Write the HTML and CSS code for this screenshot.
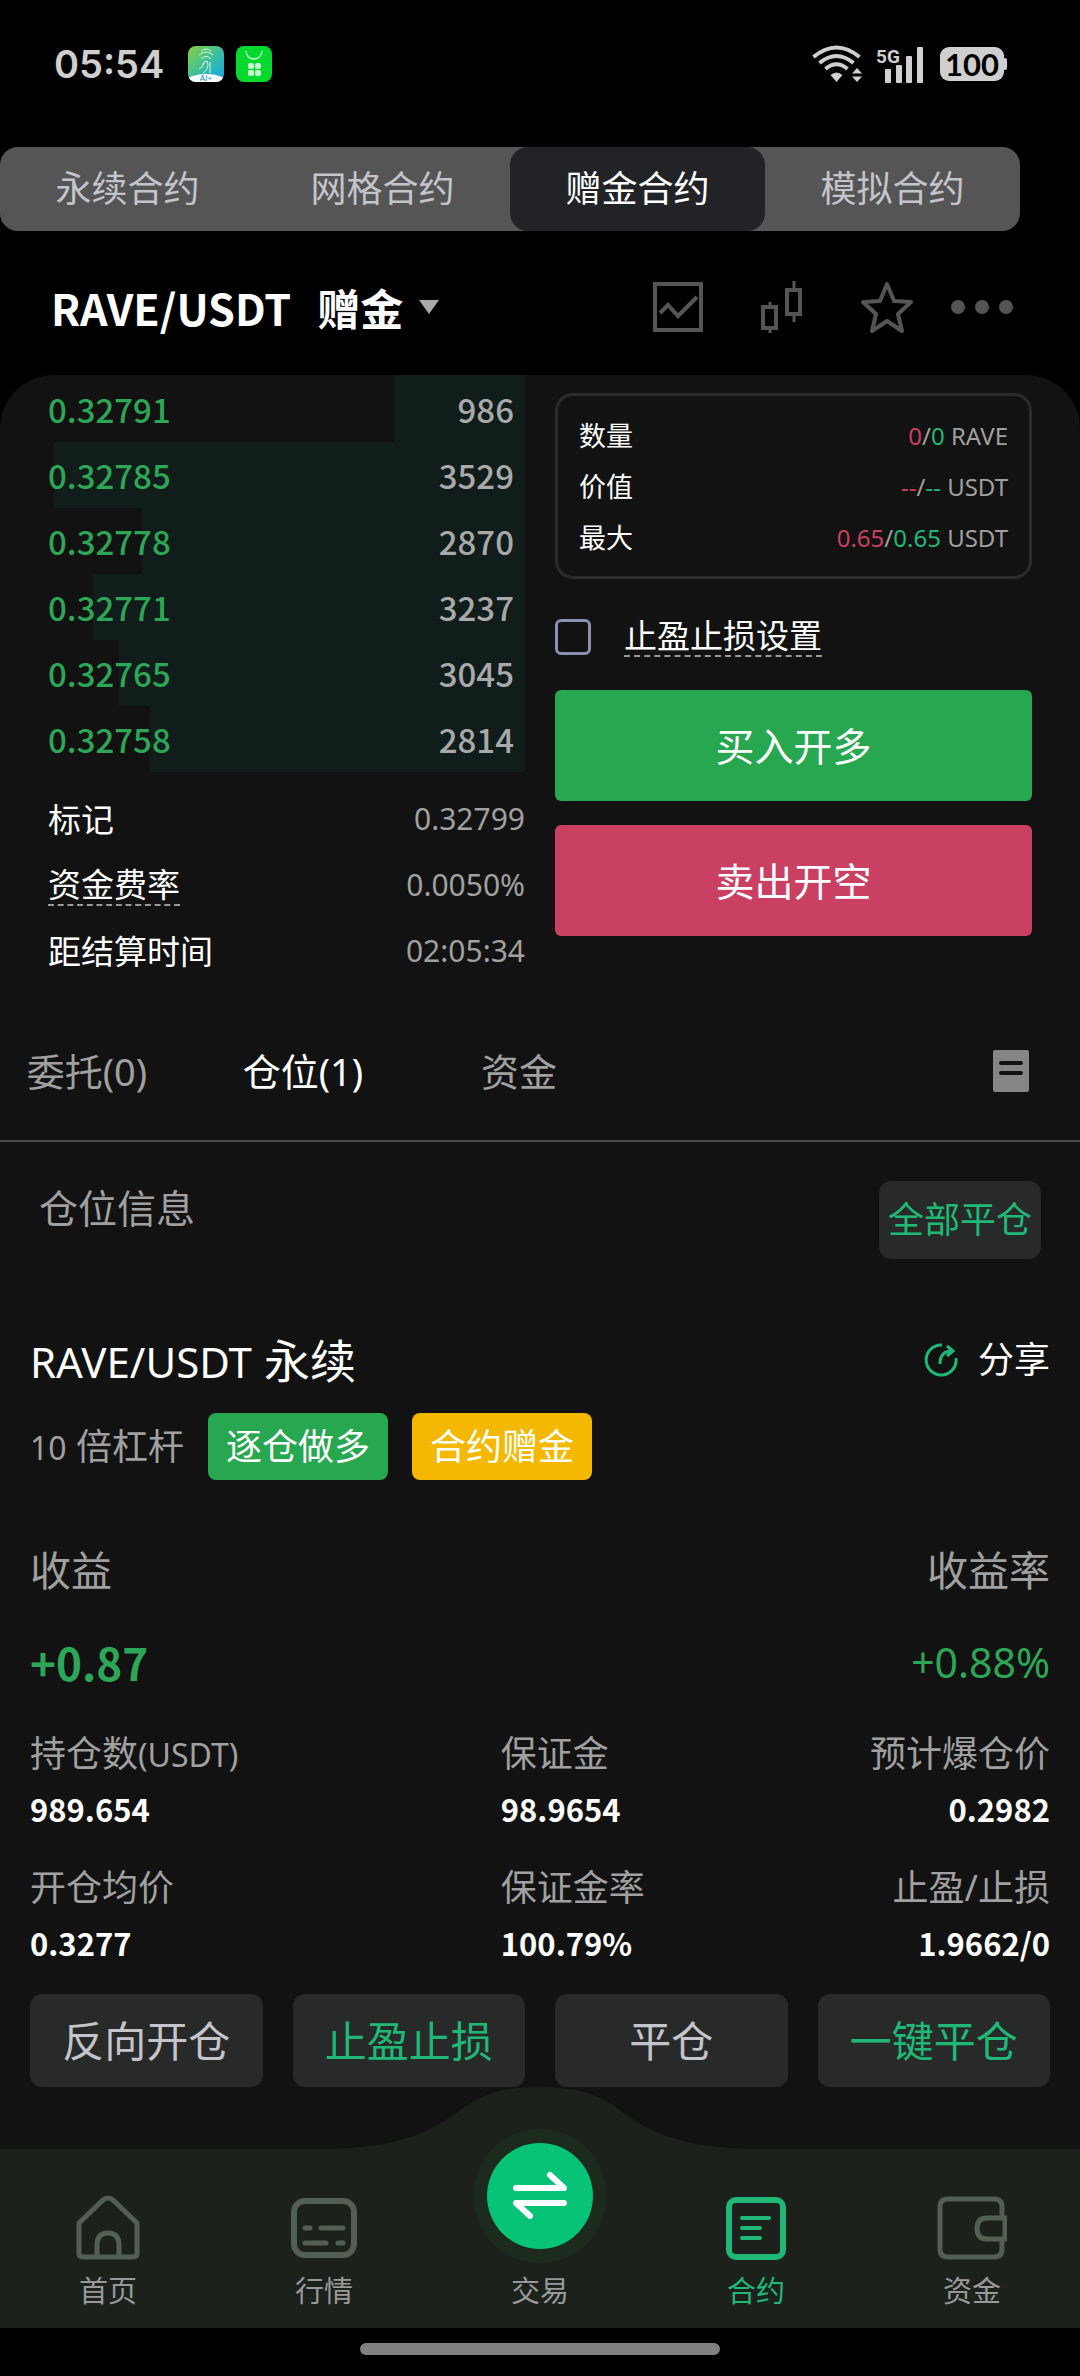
FILE: index.html
```html
<!DOCTYPE html>
<html lang="zh-CN">
  <head>
    <meta charset="UTF-8" />
    <meta name="viewport" content="width=device-width, initial-scale=1.0" />
    <title>RAVE/USDT 赠金合约</title>
    <link rel="stylesheet" href="styles.css">
  </head>
  <body>
    <header>
      <div class="status_bar">
        <time class="clock">05:54</time>
        <svg class="app_icon" viewBox="0 0 36 36">
          <defs>
            <linearGradient id="finger" x1="0" y1="0" x2="1" y2="1">
              <stop offset="0" stop-color="#8ccf3a" />
              <stop offset="0.5" stop-color="#3cbf9c" />
              <stop offset="1" stop-color="#12a5ee" />
            </linearGradient>
            <clipPath id="round"><rect width="36" height="36" rx="8" /></clipPath>
          </defs>
          <g clip-path="url(#round)">
            <rect width="36" height="36" fill="url(#finger)" />
            <ellipse cx="18" cy="36" rx="20" ry="8" fill="#fff" />
          </g>
          <path d="M13 5q5-4 10 0M11 9q7-6 14 0M13 13q5-5 10 0M11 23q4-2 5-6q3-4 4 1q0 6-5 9M14 19q3-5 6-3M22 16v11" fill="none" stroke="#d9f5e6" stroke-width="1" />
          <text x="18" y="35" class="app_text">AI+</text>
        </svg>
        <svg class="app_icon" viewBox="0 0 36 36">
          <rect width="36" height="36" rx="8" fill="#04da2e" />
          <path d="M10 5a8 8 0 0 0 16 0" fill="none" stroke="#b4ffc0" stroke-width="1.4" />
          <g fill="#c4ffce">
            <rect x="12" y="17" width="6" height="6" rx="2" />
            <rect x="19" y="17" width="6" height="6" rx="2" />
            <rect x="12" y="24" width="6" height="6" rx="2" />
            <rect x="19" y="24" width="6" height="6" rx="2" />
          </g>
        </svg>
        <svg class="wifi" viewBox="0 0 52 38">
          <path d="M1.5 12q23-19 46 0M7.5 18q17-14 34 0M13.5 24q11-9.5 22 0" fill="none" stroke="#cfcfcf" stroke-width="4" />
          <path d="M18.5 30q6-5 12 0l-6 7zM45 23l5 5.5H40zM45 37l5-5.5H40z" fill="#cfcfcf" />
        </svg>
        <svg class="signal" viewBox="0 0 48 38">
          <text x="0" y="18" class="signal_text">5G</text>
          <g fill="#cfcfcf">
            <rect x="9" y="24" width="6" height="14" rx="1" />
            <rect x="20" y="20" width="6" height="18" rx="1" />
            <rect x="30" y="11" width="6" height="27" rx="1" />
            <rect x="41" y="2" width="6" height="36" rx="1" />
          </g>
        </svg>
        <span class="battery">100</span>
      </div>
      <nav class="type_tabs">
        <a href="#">永续合约</a>
        <a href="#">网格合约</a>
        <a href="#" class="active">赠金合约</a>
        <a href="#">模拟合约</a>
      </nav>
      <div class="pair_bar">
        <button class="pair_name">RAVE/USDT<span>赠金</span></button>
        <button class="icon_btn" aria-label="图表">
          <svg width="50" height="50" viewBox="0 0 50 50" fill="none" stroke="#555" stroke-width="4">
            <rect x="2" y="2" width="46" height="46" />
            <path d="M7 31l8-8 10 11 19-19" />
          </svg>
        </button>
        <button class="icon_btn" aria-label="K线">
          <svg width="42" height="52" viewBox="0 0 42 52" fill="none" stroke="#555" stroke-width="4">
            <path d="M9 21v4M9 48v4M33 0v8M33 34v7" stroke-width="3" />
            <rect x="2" y="26" width="13" height="21" />
            <rect x="26" y="9" width="13" height="24" />
          </svg>
        </button>
        <button class="icon_btn" aria-label="收藏">
          <svg width="52" height="52" viewBox="0 0 52 52" fill="none" stroke="#555" stroke-width="4" stroke-linejoin="round">
            <path d="M26 3l7 17 17 1-13 12 4 17-15-10-15 10 4-17L2 21l17-1z" />
          </svg>
        </button>
        <button class="icon_btn" aria-label="更多">
          <svg width="62" height="14" viewBox="0 0 62 14" fill="#555">
            <circle cx="7" cy="7" r="7" />
            <circle cx="31" cy="7" r="7" />
            <circle cx="55" cy="7" r="7" />
          </svg>
        </button>
      </div>
    </header>

    <main class="panel">
      <section class="trade">
        <div class="book">
          <ul class="bids">
            <li><i style="width: 27.5%"></i><b>0.32791</b><span>986</span></li>
            <li><i style="width: 98.7%"></i><b>0.32785</b><span>3529</span></li>
            <li><i style="width: 80.3%"></i><b>0.32778</b><span>2870</span></li>
            <li><i style="width: 90.6%"></i><b>0.32771</b><span>3237</span></li>
            <li><i style="width: 85.1%"></i><b>0.32765</b><span>3045</span></li>
            <li><i style="width: 78.6%"></i><b>0.32758</b><span>2814</span></li>
          </ul>
          <dl class="market">
            <div><dt>标记</dt><dd>0.32799</dd></div>
            <div><dt><span class="dashed">资金费率</span></dt><dd>0.0050%</dd></div>
            <div><dt>距结算时间</dt><dd>02:05:34</dd></div>
          </dl>
        </div>
        <form class="order">
          <dl class="limits">
            <div><dt>数量</dt><dd><span class="down">0</span>/<span class="up">0</span> RAVE</dd></div>
            <div><dt>价值</dt><dd><span class="down">--</span>/<span class="up">--</span> USDT</dd></div>
            <div><dt>最大</dt><dd><span class="down">0.65</span>/<span class="up">0.65</span> USDT</dd></div>
          </dl>
          <div class="stop_box">
            <input type="checkbox" id="stop" name="stop" />
            <label for="stop" class="dashed">止盈止损设置</label>
          </div>
          <button type="button" class="buy">买入开多</button>
          <button type="button" class="sell">卖出开空</button>
        </form>
      </section>

      <nav class="list_tabs">
        <a href="#">委托(0)</a>
        <a href="#" class="active">仓位(1)</a>
        <a href="#">资金</a>
        <button class="history" aria-label="历史记录">
          <svg width="36" height="42" viewBox="0 0 36 42">
            <rect width="36" height="42" rx="2" fill="#868686" />
            <path d="M8 13h20M8 23h20" stroke="#121212" stroke-width="4" stroke-linecap="round" />
          </svg>
        </button>
      </nav>

      <div class="info_bar">
        <h2>仓位信息</h2>
        <button class="close_all">全部平仓</button>
      </div>

      <section class="position">
        <div class="title_row">
          <h3><span>RAVE/USDT</span> 永续</h3>
          <a href="#" class="share">
            <svg width="34" height="36" viewBox="0 0 34 36" fill="none" stroke="#1fb877" stroke-width="3">
              <path d="M18 3A15 15 0 1 0 32 16" />
              <path d="M16 22c0-9 4-13 12-13M23 4l6 5-6 5" />
            </svg>
            分享
          </a>
        </div>
        <div class="tags">
          <span><span class="latin">10</span> 倍杠杆</span>
          <span class="tag">逐仓做多</span>
          <span class="tag gift">合约赠金</span>
        </div>
        <div class="profit">
          <p>收益</p>
          <p>收益率</p>
          <strong>+0.87</strong>
          <span>+0.88%</span>
        </div>
        <dl class="stats">
          <div><dt>持仓数<span class="latin">(USDT)</span></dt><dd>989.654</dd></div>
          <div><dt>保证金</dt><dd>98.9654</dd></div>
          <div><dt>预计爆仓价</dt><dd>0.2982</dd></div>
          <div><dt>开仓均价</dt><dd>0.3277</dd></div>
          <div><dt>保证金率</dt><dd>100.79%</dd></div>
          <div><dt>止盈/止损</dt><dd>1.9662/0</dd></div>
        </dl>
        <div class="actions">
          <button>反向开仓</button>
          <button class="green">止盈止损</button>
          <button>平仓</button>
          <button class="green">一键平仓</button>
        </div>
      </section>
    </main>

    <footer>
      <svg class="bump" viewBox="0 0 420 62" width="420" height="62">
        <path d="M0 62C70 60 100 46 132 22C152 6 178 0 210 0S268 6 288 22C320 46 350 60 420 62z" fill="#1c211c" />
      </svg>
      <nav class="bottom_nav">
        <a href="#">
          <svg width="66" height="66" viewBox="0 0 66 66" fill="none" stroke="#525f52" stroke-width="5" stroke-linejoin="round">
            <path d="M4 28L28 5q5-4 10 0l24 23v30q0 4-4 4H8q-4 0-4-4z" />
            <path d="M22 62V50q0-12 11-12t11 12v12" />
          </svg>
          首页
        </a>
        <a href="#">
          <svg width="66" height="66" viewBox="0 0 66 66" fill="none" stroke="#525f52" stroke-width="6" stroke-linecap="round">
            <rect x="3" y="6" width="60" height="54" rx="11" />
            <path d="M14 33h5M30 33h22M14 48h21M47 48h5" stroke-width="5" />
          </svg>
          行情
        </a>
        <a href="#">
          <svg class="swap" width="134" height="134" viewBox="0 0 134 134">
            <circle cx="67" cy="67" r="67" fill="#1c2b1e" />
            <circle cx="67" cy="67" r="53" fill="#06c377" />
            <path d="M43 59h48L77 46M91 74H43l14 13" fill="none" stroke="#fff" stroke-width="6" stroke-linecap="round" stroke-linejoin="round" />
          </svg>
          交易
        </a>
        <a href="#" class="active">
          <svg width="66" height="66" viewBox="0 0 66 66" fill="none" stroke="#1fb877" stroke-width="6" stroke-linecap="round">
            <rect x="6" y="5" width="54" height="57" rx="7" />
            <path d="M19 23h27M19 33h18M19 43h18" stroke-width="4" />
          </svg>
          合约
        </a>
        <a href="#">
          <svg width="70" height="66" viewBox="0 0 70 66" fill="none" stroke="#525f52" stroke-width="5">
            <path d="M65 23V12q0-8-8-8H11q-8 0-8 8v42q0 8 8 8h46q8 0 8-8V44" />
            <path d="M68 23H50q-10 0-10 10.5T50 44h18z" />
          </svg>
          资金
        </a>
      </nav>
      <div class="home_bar"></div>
    </footer>
  </body>
</html>
```

FILE: styles.css
```css
* {
  margin: 0;
  padding: 0;
  box-sizing: border-box;
  list-style-type: none;
  text-decoration: none;
  color: inherit;
}
body {
  display: flex;
  flex-direction: column;
  min-height: 100vh;
  background-color: #000;
  color: #fff;
  font-family: 'Noto Sans', 'Noto Sans CJK SC', sans-serif;
  font-size: 36px;
  line-height: 1;
}
button {
  border: none;
  background: none;
  font-family: inherit;
  font-size: inherit;
  line-height: 1;
  cursor: pointer;
}
svg {
  display: block;
}

/* status bar */
.status_bar {
  display: flex;
  align-items: center;
  padding: 42px 76px 0 54px;
  height: 86px;
  color: #cfcfcf;
}
.clock {
  margin-right: 24px;
  font-family: Inter, sans-serif;
  font-size: 38px;
  font-weight: 600;
}
.app_icon {
  width: 36px;
  height: 36px;
  margin-right: 12px;
}
.app_text {
  font-family: Lato, sans-serif;
  font-size: 8px;
  text-anchor: middle;
  fill: #1592c9;
}
.wifi {
  width: 52px;
  height: 38px;
  margin-left: auto;
}
.signal {
  width: 48px;
  height: 38px;
  margin: 0 16px 0 12px;
  overflow: visible;
}
.signal_text {
  font-family: Roboto, sans-serif;
  font-size: 19px;
  font-weight: 700;
  fill: #cfcfcf;
}
.battery {
  position: relative;
  width: 64px;
  height: 34px;
  border-radius: 9px;
  background-color: #cfcfcf;
  color: #000;
  font-family: Lato, sans-serif;
  font-size: 31px;
  font-weight: 700;
  line-height: 34px;
  text-align: center;
}
.battery::after {
  content: '';
  position: absolute;
  right: -3px;
  top: 11px;
  width: 4px;
  height: 12px;
  border-radius: 2px;
  background-color: #cfcfcf;
}

/* contract type */
.type_tabs {
  display: flex;
  margin: 61px 60px 0 0;
  border-radius: 18px;
  background-color: #555;
  color: #c4c4cb;
}
.type_tabs a {
  flex: 1;
  line-height: 84px;
  text-align: center;
}
.type_tabs .active {
  border-radius: 18px;
  background-color: #222327;
  color: #fff;
}

.pair_bar {
  display: flex;
  align-items: center;
  height: 144px;
  padding: 8px 67px 0 51px;
}
.pair_name {
  display: flex;
  align-items: center;
  gap: 26px;
  margin-right: auto;
  font-family: 'Noto Sans CJK SC', sans-serif;
  font-size: 43px;
  font-weight: 700;
}
.pair_name::after {
  content: '';
  margin-left: -10px;
  border: 10px solid transparent;
  border-top: 14px solid #aaa;
  border-bottom: 0;
}
.icon_btn {
  margin-left: 58px;
}
.icon_btn:last-child {
  margin-left: 38px;
}

/* order book + order form */
.panel {
  flex: 1;
  border-radius: 54px 54px 0 0;
  background-color: #121212;
}
.trade {
  display: grid;
  grid-template-columns: 1fr 1fr;
  gap: 30px;
  padding: 0 48px;
}
.bids li {
  position: relative;
  display: flex;
  justify-content: space-between;
  padding-right: 11px;
  font-family: 'Noto Sans CJK SC', sans-serif;
  font-size: 33px;
  font-weight: 500;
  line-height: 66px;
}
.bids li:first-child {
  padding-top: 1px;
}
.bids i {
  position: absolute;
  top: 0;
  right: 0;
  height: 100%;
  background-color: #111d1a;
}
.bids b,
.bids span {
  position: relative;
  font-weight: 500;
}
.bids b {
  color: #2ea657;
}
.bids span {
  color: #a9a9a9;
}
.market {
  padding-top: 14px;
}
.market div {
  display: flex;
  justify-content: space-between;
  align-items: center;
  height: 66px;
}
.market dt {
  font-size: 33px;
}
.market dd {
  font-size: 30px;
  color: #a0a0a0;
}
.dashed {
  display: inline-block;
  padding: 3px 0;
  border-bottom: 2px dashed #999;
}
.order {
  display: flex;
  flex-direction: column;
  padding-top: 18px;
}
.limits {
  padding: 14px 21px 13px;
  border: 3px solid #2b2b2b;
  border-radius: 18px;
}
.limits div {
  display: flex;
  justify-content: space-between;
  align-items: center;
  height: 51px;
}
.limits dt {
  font-size: 27px;
}
.limits dd {
  font-size: 24px;
  color: #a0a0a0;
}
.up {
  color: #1fb877;
}
.down {
  color: #c94063;
}
.stop_box {
  display: flex;
  align-items: center;
  gap: 33px;
  height: 111px;
  padding-top: 4px;
  font-size: 33px;
}
.stop_box input {
  appearance: none;
  width: 36px;
  height: 36px;
  border: 3px solid #8b90b2;
  border-radius: 6px;
}
.buy,
.sell {
  height: 111px;
  margin-bottom: 24px;
  border-radius: 6px;
  background-color: #27a74f;
  font-size: 39px;
}
.sell {
  background-color: #c94063;
}

/* order list tabs */
.list_tabs {
  display: flex;
  align-items: center;
  gap: 42px;
  height: 140px;
  margin-top: 18px;
  border-bottom: 2px solid #4a4a4a;
  font-size: 38px;
  color: #a0a0a0;
}
.list_tabs a {
  width: 174px;
  text-align: center;
}
.list_tabs .active {
  color: #fff;
}
.history {
  margin: 0 51px 0 auto;
}
.info_bar {
  display: flex;
  justify-content: space-between;
  padding: 39px 39px 0;
}
.info_bar h2 {
  font-size: 39px;
  font-weight: 400;
  line-height: 54px;
  color: #a0a0a0;
}
.close_all {
  padding: 0 9px;
  height: 78px;
  border-radius: 12px;
  background-color: #282a29;
  color: #1fb877;
}

/* position card */
.position {
  padding: 71px 30px 57px;
}
.title_row,
.share,
.tags {
  display: flex;
  align-items: center;
}
.title_row {
  justify-content: space-between;
  height: 60px;
}
.title_row h3 {
  font-size: 46px;
  font-weight: 400;
}
.title_row h3 span {
  font-size: 42px;
}
.latin {
  font-size: 32px;
}
.share {
  gap: 20px;
}
.tags {
  gap: 24px;
  padding-top: 23px;
  color: #a0a0a0;
}
.tag {
  padding: 0 18px;
  border-radius: 8px;
  background-color: #27a74f;
  line-height: 67px;
  color: #fff;
}
.gift {
  background-color: #f4b800;
}
.profit {
  display: grid;
  grid-template-columns: 1fr auto;
  align-items: center;
  padding-top: 44px;
  font-size: 41px;
  line-height: 92px;
  color: #a0a0a0;
}
.profit strong {
  font-family: 'Noto Sans CJK SC', sans-serif;
  font-size: 44px;
  color: #2ea657;
}
.profit span {
  color: #2ea657;
}
.profit > :nth-child(even) {
  text-align: right;
}
.stats {
  display: grid;
  grid-template-columns: 6fr 4fr 3fr;
  row-gap: 24px;
  padding-top: 18px;
}
.stats div:nth-child(3n) {
  text-align: right;
}
.stats dt {
  height: 56px;
  line-height: 56px;
  white-space: nowrap;
  color: #a0a0a0;
}
.stats dd {
  font-family: 'Noto Sans CJK SC', sans-serif;
  font-size: 31px;
  font-weight: 700;
  line-height: 54px;
}
.actions {
  display: grid;
  grid-template-columns: repeat(4, 1fr);
  gap: 30px;
  padding-top: 24px;
}
.actions button {
  height: 93px;
  border-radius: 12px;
  background-color: #282a29;
  font-size: 42px;
  color: #c4c4cb;
}
.actions .green {
  color: #1fb877;
}

/* bottom navigation */
footer {
  position: relative;
}
.bump {
  position: absolute;
  left: 50%;
  bottom: 100%;
  transform: translateX(-50%);
}
.bottom_nav {
  display: grid;
  grid-template-columns: repeat(5, 1fr);
  height: 179px;
  background-color: #1c211c;
  font-size: 29px;
  color: #999;
}
.bottom_nav a {
  display: flex;
  flex-direction: column;
  justify-content: flex-end;
  align-items: center;
  gap: 15px;
  padding-bottom: 23px;
}
.bottom_nav .swap {
  position: absolute;
  top: -20px;
}
.bottom_nav .active {
  color: #1fb877;
}
.home_bar {
  width: 360px;
  height: 12px;
  margin: 15px auto 21px;
  border-radius: 6px;
  background-color: #808080;
}
```
